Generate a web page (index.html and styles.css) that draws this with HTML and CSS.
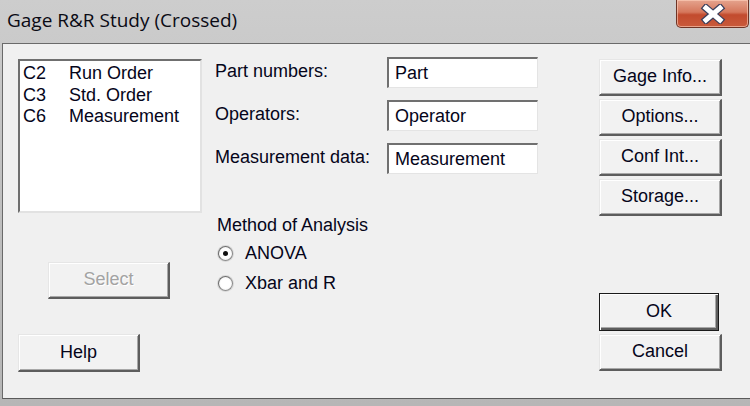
FILE: index.html
```html
<!DOCTYPE html>
<html>
<head>
<meta charset="utf-8">
<link rel="stylesheet" href="styles.css">
</head>
<body>
<div class="window">
  <div class="titlebar">
    <span class="title">Gage R&amp;R Study (Crossed)</span>
    <div class="close">
      <svg width="30" height="20" viewBox="0 0 30 20">
        <path d="M8 4 L22 16 M22 4 L8 16" stroke="#3a3f5c" stroke-width="7.5" stroke-linecap="square"/>
        <path d="M8 4 L22 16 M22 4 L8 16" stroke="#ffffff" stroke-width="5" stroke-linecap="square"/>
      </svg>
    </div>
  </div>
  <div class="client">
    <div class="col-left">
      <div class="listbox">
        <div class="item"><span class="cnum">C2</span><span>Run Order</span></div>
        <div class="item"><span class="cnum">C3</span><span>Std. Order</span></div>
        <div class="item"><span class="cnum">C6</span><span>Measurement</span></div>
      </div>
      <div class="btn select disabled">Select</div>
      <div class="btn help">Help</div>
    </div>
    <div class="col-mid">
      <div class="field"><span class="label">Part numbers:</span><div class="input">Part</div></div>
      <div class="field"><span class="label">Operators:</span><div class="input">Operator</div></div>
      <div class="field"><span class="label">Measurement data:</span><div class="input">Measurement</div></div>
      <div class="group-label">Method of Analysis</div>
      <div class="radio first"><span class="circle on"></span>ANOVA</div>
      <div class="radio"><span class="circle"></span>Xbar and R</div>
    </div>
    <div class="col-right">
      <div class="btn-stack">
        <div class="btn">Gage Info...</div>
        <div class="btn">Options...</div>
        <div class="btn">Conf Int...</div>
        <div class="btn">Storage...</div>
      </div>
      <div class="btn-stack bottom">
        <div class="btn default">OK</div>
        <div class="btn">Cancel</div>
      </div>
    </div>
  </div>
</div>
</body>
</html>
```
FILE: styles.css
```css
html, body {
  margin: 0;
  padding: 0;
}
body {
  width: 750px;
  height: 406px;
  overflow: hidden;
  font-family: "Liberation Sans", Arial, sans-serif;
}
.window {
  width: 750px;
  height: 406px;
  box-sizing: border-box;
  display: flex;
  flex-direction: column;
  background: linear-gradient(180deg, #cdcdcd 0%, #bdbdbd 60%, #b6b6b6 100%);
  padding-bottom: 7px;
}
.titlebar {
  height: 43px;
  flex: none;
  display: flex;
  justify-content: space-between;
  align-items: flex-start;
}
.title {
  font-family: "Open Sans", "Noto Sans", sans-serif;
  font-size: 19px;
  color: #0a0a14;
  margin-left: 7px;
  margin-top: 6px;
  line-height: 28px;
}
.close {
  width: 73px;
  height: 28px;
  margin-right: 1px;
  box-sizing: border-box;
  border: 1px solid #6e3426;
  border-top: none;
  border-radius: 0 0 5px 5px;
  background: linear-gradient(180deg, #e5a48e 0%, #d5775c 45%, #c24b2e 55%, #c95a3b 100%);
  box-shadow: inset 0 0 0 1px rgba(255, 210, 190, 0.6);
  display: flex;
  align-items: center;
  justify-content: center;
}
.client {
  flex: 1;
  margin-left: 2px;
  border-left: 1px solid #6a6a6a;
  border-top: 1px solid #6a6a6a;
  border-bottom: 1px solid #5a5a5a;
  background: #f0f0f0;
  display: flex;
  padding: 13px 0 0 15px;
  font-size: 18px;
  color: #05051a;
}
.col-left {
  width: 184px;
  padding-top: 2px;
  display: flex;
  flex-direction: column;
}
.listbox {
  height: 154px;
  box-sizing: border-box;
  background: #fff;
  border-top: 2px solid #6f6f6f;
  border-left: 2px solid #6f6f6f;
  border-right: 2px solid #e2e2e2;
  border-bottom: 2px solid #e2e2e2;
  padding: 2px 0 0 3px;
}
.item {
  display: flex;
  height: 21.5px;
  line-height: 21px;
}
.cnum {
  width: 46px;
}
.btn {
  box-sizing: border-box;
  height: 37px;
  display: flex;
  align-items: center;
  justify-content: center;
  background: #f2f2f2;
  border-top: 1px solid #e6e6e6;
  border-left: 1px solid #e6e6e6;
  border-right: 2px solid #5d5d5d;
  border-bottom: 2px solid #5d5d5d;
  box-shadow: inset 1px 1px 0 #ffffff, inset -1px -1px 0 #a8a8a8;
  font-size: 18px;
  padding-bottom: 1px;
}
.select {
  width: 122px;
  margin-top: 49px;
  margin-left: 30px;
}
.disabled {
  color: #a3a3a3;
  text-shadow: 1px 1px 0 #ffffff;
}
.help {
  width: 122px;
  height: 38px;
  margin-top: 35px;
}
.col-mid {
  width: 323px;
  margin-left: 13px;
  display: flex;
  flex-direction: column;
}
.field {
  display: flex;
  align-items: center;
  height: 31px;
  margin-bottom: 12px;
}
.label {
  width: 172px;
  margin-top: -3px;
}
.input {
  width: 151px;
  height: 31px;
  box-sizing: border-box;
  background: #fff;
  border-top: 2px solid #707070;
  border-left: 2px solid #707070;
  border-right: 1px solid #e4e4e4;
  border-bottom: 1px solid #e4e4e4;
  padding-left: 6px;
  line-height: 28px;
}
.group-label {
  margin-top: 28px;
  margin-left: 2px;
  line-height: 22px;
}
.radio {
  display: flex;
  align-items: center;
  height: 30px;
  padding-left: 3px;
}
.radio.first {
  margin-top: 2px;
}
.circle {
  width: 15px;
  height: 15px;
  box-sizing: border-box;
  border-radius: 50%;
  border: 1.5px solid #8c8c8c;
  border-top-color: #6c6c6c;
  border-left-color: #6c6c6c;
  background: radial-gradient(circle, #ffffff 50%, #e4e4e4 100%);
  box-shadow: 0 0 0 1px rgba(200, 200, 200, 0.6);
  margin-right: 12px;
  display: flex;
  align-items: center;
  justify-content: center;
}
.circle.on::after {
  content: "";
  width: 5px;
  height: 5px;
  border-radius: 50%;
  background: #111;
}
.col-right {
  width: 123px;
  margin-left: 61px;
  padding-top: 2px;
  display: flex;
  flex-direction: column;
}
.btn-stack {
  display: flex;
  flex-direction: column;
  gap: 3px;
}
.btn-stack.bottom {
  margin-top: 77px;
}
.btn.default {
  width: 120px;
  border: 1px solid #1a1a1a;
  box-shadow: inset 1px 1px 0 #ffffff, inset -2px -2px 0 #5d5d5d, inset -3px -3px 0 #a8a8a8;
  height: 38px;
}
```
